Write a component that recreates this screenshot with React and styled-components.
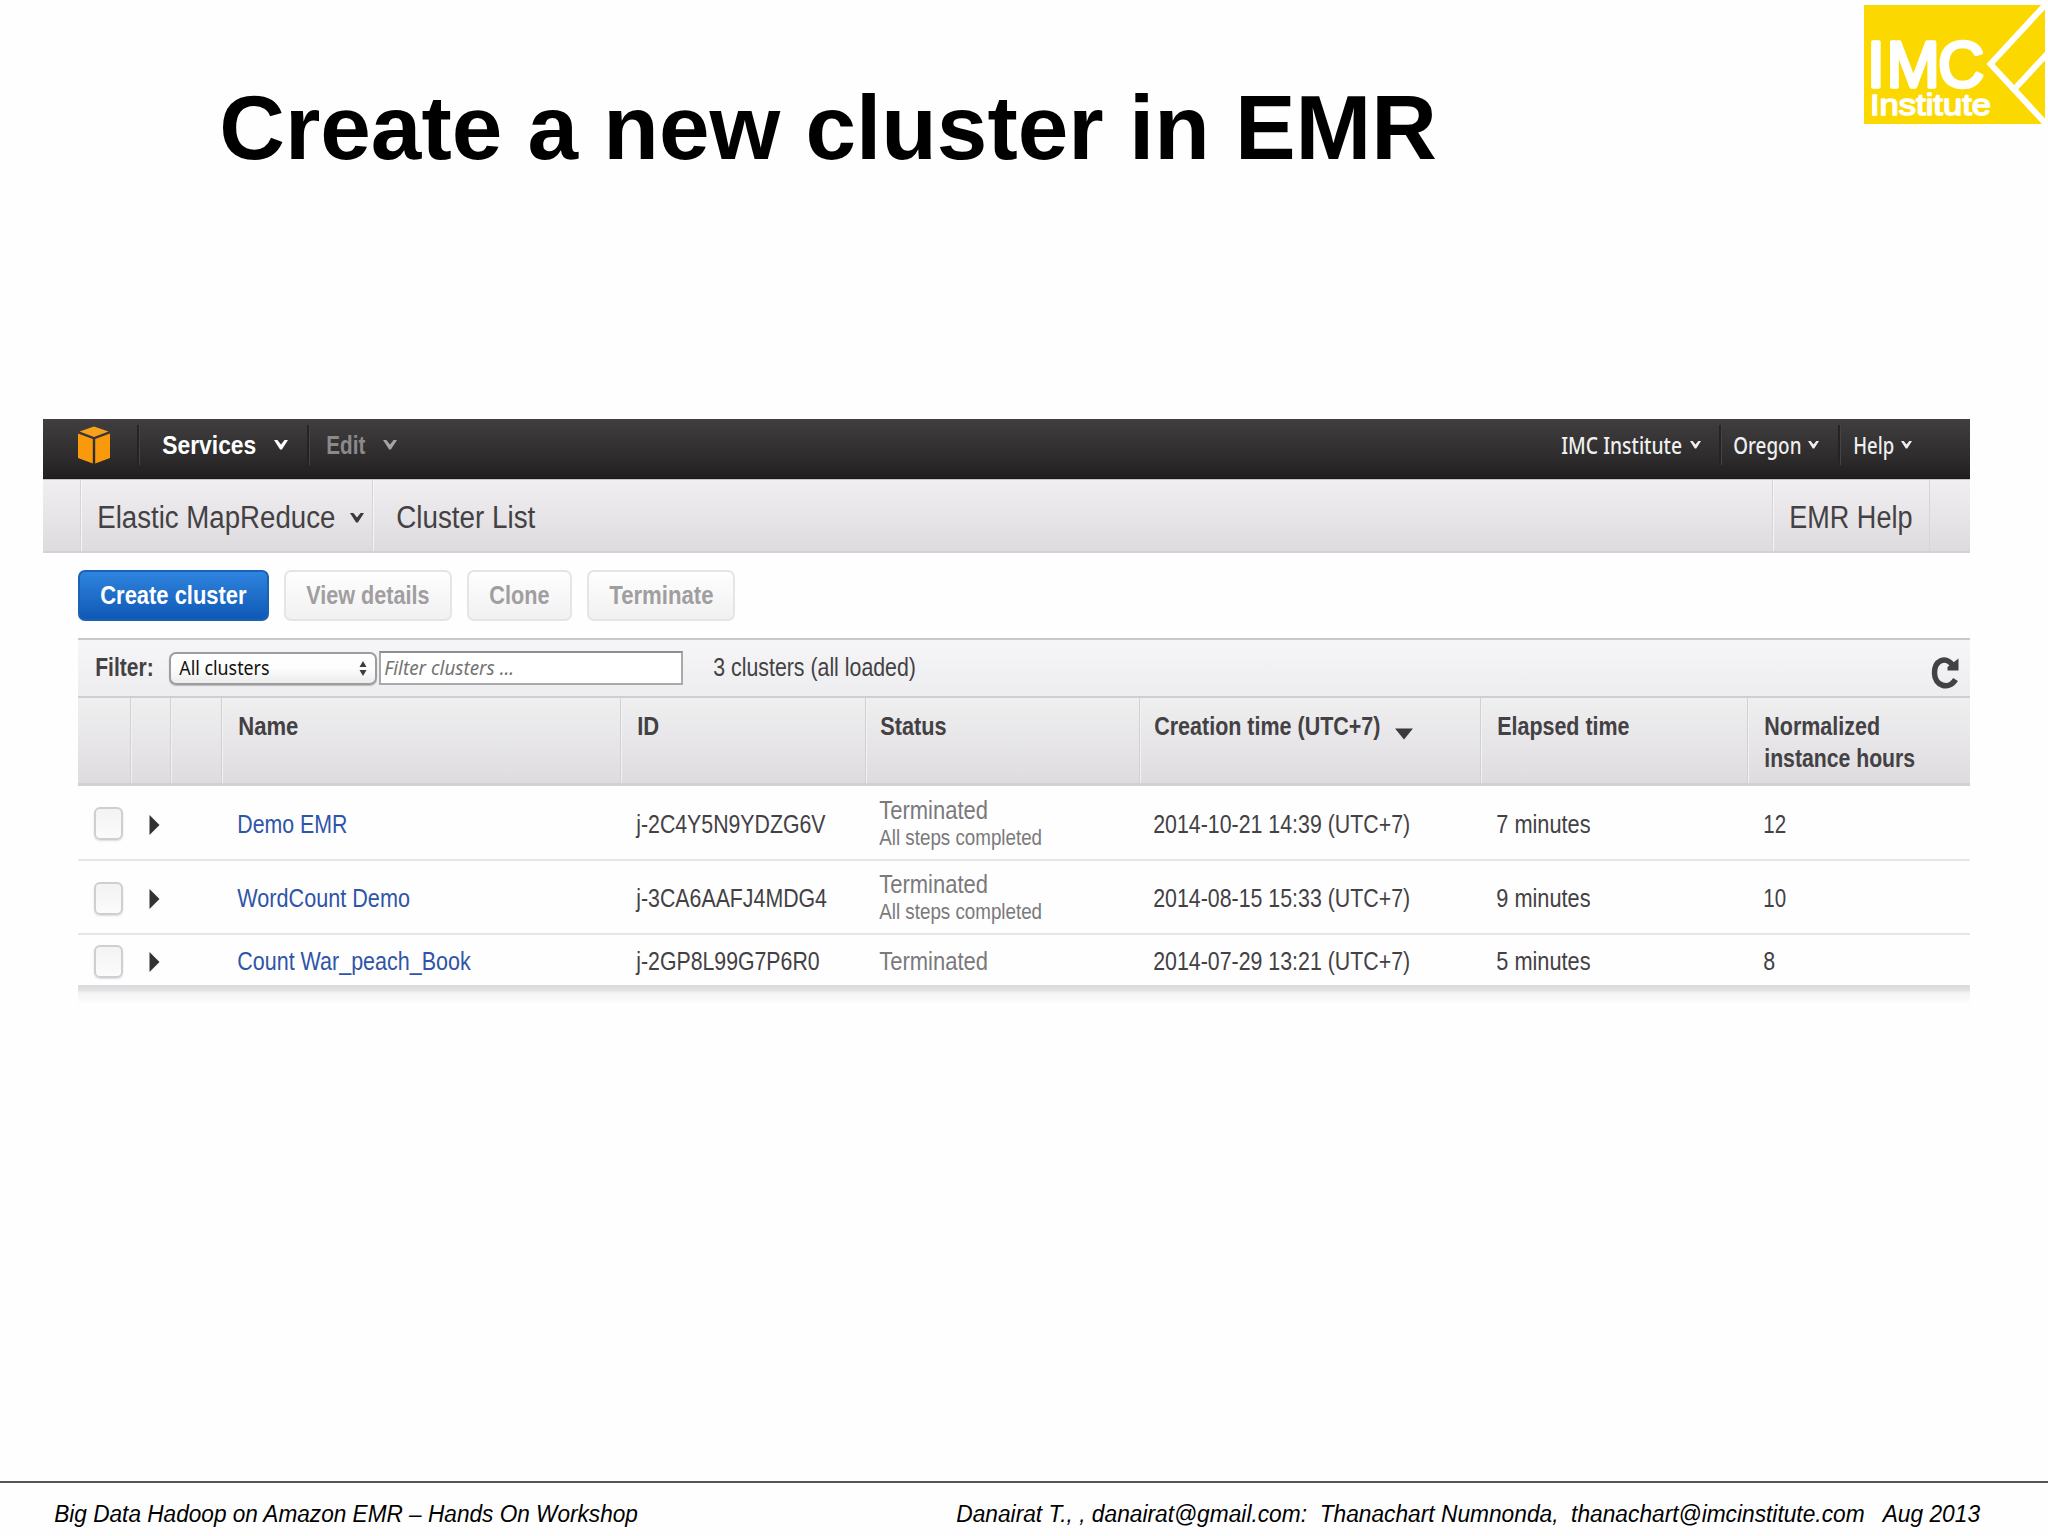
import React, { useLayoutEffect, useRef, useState } from 'react';
import styled, { createGlobalStyle, css } from 'styled-components';

const GlobalStyle = createGlobalStyle`
  * {
    box-sizing: border-box;
  }

  body {
    margin: 0;
    background: #fefefe;
    font-family: "Liberation Sans", Arial, sans-serif;
  }
`;

const FitBox = styled.span`
  display: inline-block;
  flex: none;
  width: ${props => props.$w}px;
  white-space: pre;
`;

const FitInner = styled.span`
  display: inline-block;
  transform-origin: 0 50%;
`;

// condenses a label so that its letters fill exactly w pixels
const Fit = ({ w, children }) => {
  const inner = useRef(null);
  const [scale, setScale] = useState(1);

  useLayoutEffect(() => {
    setScale((w + 1) / inner.current.offsetWidth);
  }, [w, children]);

  return (
    <FitBox $w={w}>
      <FitInner ref={inner} style={{ transform: `translateX(-0.75px) scaleX(${scale})` }}>
        {children}
      </FitInner>
    </FitBox>
  );
};

const Slide = styled.div`
  display: flex;
  flex-direction: column;
  width: 2048px;
  height: 1536px;
  overflow: hidden;
`;

const SlideHeader = styled.header`
  display: flex;
  justify-content: space-between;
  align-items: flex-start;
  height: 419px;
  padding: 5px 3px 0 220px;
`;

const Title = styled.h1`
  margin: 72px 0 0;
  font-size: 91px;
  line-height: 102px;
  font-weight: bold;
  color: #000;
`;

const Logo = styled.svg`
  display: block;
  width: 181px;
  height: 119px;
`;

const LogoText = styled.text`
  font-family: "Liberation Sans", Arial, sans-serif;
  font-size: ${props => props.$size}px;
  fill: #fff;
  stroke: #fff;
  stroke-width: ${props => props.$stroke};
  stroke-linejoin: round;
`;

const Console = styled.main`
  width: 1927px;
  margin-left: 43px;
`;

const TopNav = styled.nav`
  display: flex;
  height: 60px;
  padding: 6px 58px 0 35px;
  background: linear-gradient(#403e3f, #2f2d2e 60%, #211f20);
  border-bottom: 1px solid #1a1819;
`;

const NavItem = styled.div`
  display: flex;
  align-items: center;
  height: 40px;
  gap: ${props => props.$gap || 19}px;
  padding-left: ${props => props.$left}px;
  padding-right: ${props => props.$right || 0}px;
  color: ${props => props.$color || '#fff'};
  font-size: 26px;
  font-weight: bold;

  ${props => props.$divider && css`
    border-left: 2px solid #252324;
    box-shadow: inset 1px 0 #454344;
  `}

  ${props => props.$small && css`
    color: #efefef;
    font-family: "Noto Sans", sans-serif;
    font-size: 23px;
    font-weight: 500;
  `}
`;

const Cube = styled.svg`
  display: block;
  width: 32px;
  height: 38px;
  margin: 1px 27px 0 0;
`;

const Spacer = styled.div`
  flex: 1;
`;

const SubNav = styled.nav`
  display: flex;
  height: 74px;
  padding: 0 40px 0 37px;
  background: linear-gradient(#f0eef0, #e6e4e6 55%, #dddbdd);
  border-top: 1px solid #c8c6c8;
  border-bottom: 2px solid #d3d1d3;
  font-size: 31px;
  color: #434144;
`;

const SubItem = styled.div`
  display: flex;
  align-items: center;
  gap: 15px;
  padding: 4px ${props => props.$right}px 0 ${props => props.$left}px;
  border-left: 1px solid #d6d4d6;
  box-shadow: inset 1px 0 #f7f6f7;
`;

const Edge = styled.div`
  border-left: 1px solid #d6d4d6;
  box-shadow: inset 1px 0 #f7f6f7;
`;

const Body = styled.section`
  padding: 17px 0 0 35px;
`;

const Actions = styled.div`
  display: flex;
  gap: 15px;
  height: 51px;
  margin-bottom: 17px;
`;

const Button = styled.button`
  display: flex;
  align-items: center;
  justify-content: center;
  width: ${props => props.$w}px;
  padding: 0;
  border: 2px solid ${props => (props.$primary ? '#1c62b4' : '#e6e5e6')};
  border-radius: 7px;
  background: ${props => (props.$primary
    ? 'linear-gradient(#2e84de, #1059b6)'
    : 'linear-gradient(#fefefe, #f2f1f2)')};
  color: ${props => (props.$primary ? '#fff' : '#a09ea0')};
  font: bold 26px "Liberation Sans", Arial, sans-serif;
`;

const FilterBar = styled.div`
  display: flex;
  align-items: center;
  height: 58px;
  padding: 0 10px 2px 18px;
  background: linear-gradient(#f6f5f7, #ededef);
  border-top: 2px solid #c9c8ca;
  font-size: 25px;
  color: #434144;
`;

const FilterLabel = styled.label`
  width: 73px;
  font-weight: bold;
`;

const Select = styled.div`
  display: flex;
  align-items: center;
  justify-content: space-between;
  width: 208px;
  height: 33px;
  margin-top: 2px;
  padding: 0 8px 0 9px;
  border: 2px solid #9d9c9e;
  border-radius: 7px;
  background: linear-gradient(#fff, #fdfdfd 50%, #ececec);
  box-shadow: 0 1px 1px #bbb;
  font-family: "Noto Sans", sans-serif;
  font-size: 19px;
  color: #111;
`;

const SearchBox = styled.div`
  display: flex;
  align-items: center;
  width: 304px;
  height: 34px;
  margin: 1px 31px 0 2px;
  padding-left: 4px;
  border: 2px solid #a9a8aa;
  border-top-color: #8e8d8f;
  background: #fff;
  font-family: "Noto Sans", sans-serif;
  font-size: 20px;
  font-style: italic;
  color: #747374;
`;

const RefreshIcon = styled.svg`
  display: block;
  width: 29px;
  height: 34px;
  margin-top: 12px;
`;

const columns = '52px 40px 51px 399px 245px 274px 341px 267px 223px';

const HeadRow = styled.div`
  display: grid;
  grid-template-columns: ${columns};
  height: 90px;
  background: linear-gradient(#f0eff0, #dedcdf);
  border-top: 2px solid #cfced0;
  border-bottom: 3px solid #d2d0d3;
`;

const HeadCell = styled.div`
  display: flex;
  align-items: flex-start;
  gap: 15px;
  padding: 12px 0 0 ${props => props.$left || 17}px;
  font-size: 25px;
  line-height: 32px;
  font-weight: bold;
  color: #434144;

  & + & {
    border-left: 1px solid #d2d0d2;
    box-shadow: inset 1px 0 #f3f2f3;
  }
`;

const SortArrow = styled.svg`
  display: block;
  width: 18px;
  height: 12px;
  margin-top: 18px;
`;

const Row = styled.div`
  display: grid;
  grid-template-columns: ${columns};
  height: ${props => props.$h}px;
  padding-top: 2px;
  border-bottom: ${props => (props.$last ? 'none' : '2px solid #e6e5e7')};
`;

const Cell = styled.div`
  display: flex;
  flex-direction: column;
  align-items: flex-start;
  justify-content: center;
  padding-left: ${props => (props.$left === undefined ? 17 : props.$left)}px;
  font-size: 25px;
  line-height: 28px;
  color: ${props => props.$color || '#434144'};
`;

const SubStatus = styled.div`
  font-size: 22px;
`;

const Checkbox = styled.div`
  width: 29px;
  height: 33px;
  border: 2px solid #cfced0;
  border-radius: 6px;
  background: linear-gradient(#f3f3f3, #fbfbfb);
  box-shadow: 0 1px 2px #dcdcdc;
`;

const TableShadow = styled.div`
  height: 19px;
  background: linear-gradient(#dbd9dc, #e2e0e3 5px, #f5f3f6 8px, #fefefe);
`;

const Footer = styled.footer`
  display: flex;
  justify-content: space-between;
  align-items: center;
  height: 55px;
  margin-top: auto;
  padding: 10px 68px 0 55px;
  border-top: 2px solid #555457;
  font-size: 23px;
  font-style: italic;
  color: #000;
`;

const Chevron = ({ color = '#fff', width = 14, height = 10 }) => (
  <svg width={width} height={height} viewBox="0 0 14 10">
    <path d="M0 0H3.4L7 4.4L10.6 0H14L7.9 9.6H6.1Z" fill={color} />
  </svg>
);

const clusters = [
  { name: 'Demo EMR', nameW: 109, id: 'j-2C4Y5N9YDZG6V', idW: 188, steps: true, time: '2014-10-21 14:39 (UTC+7)', elapsed: '7 minutes', hours: '12', hoursW: 22, h: 75 },
  { name: 'WordCount Demo', nameW: 172, id: 'j-3CA6AAFJ4MDG4', idW: 190, steps: true, time: '2014-08-15 15:33 (UTC+7)', elapsed: '9 minutes', hours: '10', hoursW: 22, h: 74 },
  { name: 'Count War_peach_Book', nameW: 232, id: 'j-2GP8L99G7P6R0', idW: 182, steps: false, time: '2014-07-29 13:21 (UTC+7)', elapsed: '5 minutes', hours: '8', hoursW: 11, h: 50 }
];

const ClusterRow = ({ cluster, last }) => (
  <Row $h={cluster.h} $last={last}>
    <Cell $left={16}><Checkbox /></Cell>
    <Cell $left={19}>
      <svg width="11" height="22" viewBox="0 0 11 22">
        <path d="M0.5 2L10.5 12L0.5 22Z" fill="#333134" />
      </svg>
    </Cell>
    <Cell />
    <Cell $color="#2f55a8"><Fit w={cluster.nameW}>{cluster.name}</Fit></Cell>
    <Cell><Fit w={cluster.idW}>{cluster.id}</Fit></Cell>
    <Cell $color="#7b797c" $left={15}>
      <Fit w={108}>Terminated</Fit>
      {cluster.steps && <SubStatus><Fit w={162}>All steps completed</Fit></SubStatus>}
    </Cell>
    <Cell $left={15}><Fit w={256}>{cluster.time}</Fit></Cell>
    <Cell><Fit w={93}>{cluster.elapsed}</Fit></Cell>
    <Cell><Fit w={cluster.hoursW}>{cluster.hours}</Fit></Cell>
  </Row>
);

const App = () => (
  <Slide>
    <GlobalStyle />
    <SlideHeader>
      <Title><Fit w={1217}>Create a new cluster in EMR</Fit></Title>
      <Logo viewBox="0 0 181 119">
        <rect width="181" height="119" fill="#fbd900" />
        <path d="M183 -2L126.500 59L183 120M150.500 84L183 49" fill="none" stroke="#fff" strokeWidth="6" />
        <LogoText x="3 22.500 74" y="82" $size={64} $stroke={3.5}>IMC</LogoText>
        <LogoText x="6" y="110" $size={30} $stroke={1.5} textLength="121" lengthAdjust="spacingAndGlyphs">Institute</LogoText>
      </Logo>
    </SlideHeader>

    <Console>
      <TopNav>
        <Cube viewBox="0 0 32 38">
          <path d="M16 0.500L30.500 5.500L16 11L1.500 5.500Z" fill="#f7a11c" />
          <path d="M0 7.500L14.800 13V32L14.800 37.500L0 32Z" fill="#f99a0c" />
          <path d="M32 7.500L17.200 13V37.500L32 32Z" fill="#f99a0c" />
        </Cube>
        <NavItem $divider $left={24} $right={19} $gap={18}>
          <Fit w={93}>Services</Fit>
          <Chevron />
        </NavItem>
        <NavItem $divider $left={18} $gap={18} $color="#8b898a">
          <Fit w={38}>Edit</Fit>
          <Chevron color="#a5a3a4" />
        </NavItem>
        <Spacer />
        <NavItem $small $gap={8} $left={0} $right={18}>
          <Fit w={120}>IMC Institute</Fit>
          <Chevron color="#efefef" width={11} height={8} />
        </NavItem>
        <NavItem $small $divider $gap={7} $left={13} $right={19}>
          <Fit w={67}>Oregon</Fit>
          <Chevron color="#efefef" width={11} height={8} />
        </NavItem>
        <NavItem $small $divider $gap={7} $left={14}>
          <Fit w={40}>Help</Fit>
          <Chevron color="#efefef" width={11} height={8} />
        </NavItem>
      </TopNav>

      <SubNav>
        <SubItem $left={17} $right={8}>
          <Fit w={237}>Elastic MapReduce</Fit>
          <Chevron color="#3b393c" />
        </SubItem>
        <SubItem $left={24} $right={0}>
          <Fit w={138}>Cluster List</Fit>
        </SubItem>
        <Spacer />
        <SubItem $left={17} $right={17}>
          <Fit w={122}>EMR Help</Fit>
        </SubItem>
        <Edge />
      </SubNav>

      <Body>
        <Actions>
          <Button $primary $w={191}><Fit w={145}>Create cluster</Fit></Button>
          <Button $w={168}><Fit w={122}>View details</Fit></Button>
          <Button $w={105}><Fit w={59}>Clone</Fit></Button>
          <Button $w={148}><Fit w={103}>Terminate</Fit></Button>
        </Actions>

        <FilterBar>
          <FilterLabel><Fit w={57}>Filter:</Fit></FilterLabel>
          <Select>
            <Fit w={89}>All clusters</Fit>
            <svg width="8" height="15" viewBox="0 0 8 15">
              <path d="M4 0L7.500 6H0.500ZM4 15L7.500 9H0.500Z" fill="#3c3b3d" />
            </svg>
          </Select>
          <SearchBox><Fit w={129}>Filter clusters ...</Fit></SearchBox>
          <Fit w={202}>3 clusters (all loaded)</Fit>
          <Spacer />
          <RefreshIcon viewBox="0 0 29 34">
            <path d="M22 9.500C14 -1 3.500 5 3.500 17C3.500 30 18 34.500 24.500 23.500" fill="none" stroke="#434144" strokeWidth="5.500" />
            <path d="M27.500 2.500V14.500H16.500V11Z" fill="#434144" />
          </RefreshIcon>
        </FilterBar>

        <HeadRow>
          <HeadCell />
          <HeadCell />
          <HeadCell />
          <HeadCell><Fit w={59}>Name</Fit></HeadCell>
          <HeadCell><Fit w={21}>ID</Fit></HeadCell>
          <HeadCell $left={15}><Fit w={65}>Status</Fit></HeadCell>
          <HeadCell $left={15}>
            <Fit w={225}>Creation time (UTC+7)</Fit>
            <SortArrow viewBox="0 0 18 12"><path d="M0 0.500H18L9 11.500Z" fill="#3b393c" /></SortArrow>
          </HeadCell>
          <HeadCell><Fit w={131}>Elapsed time</Fit></HeadCell>
          <HeadCell>
            <div>
              <Fit w={115}>Normalized</Fit>
              <br />
              <Fit w={150}>instance hours</Fit>
            </div>
          </HeadCell>
        </HeadRow>
        {clusters.map((cluster, i) => (
          <ClusterRow key={cluster.id} cluster={cluster} last={i === clusters.length - 1} />
        ))}
        <TableShadow />
      </Body>
    </Console>

    <Footer>
      <Fit w={583}>Big Data Hadoop on Amazon EMR – Hands On Workshop</Fit>
      <Fit w={1023}>{'Danairat T., , danairat@gmail.com:  Thanachart Numnonda,  thanachart@imcinstitute.com   Aug 2013'}</Fit>
    </Footer>
  </Slide>
);

export default App;
